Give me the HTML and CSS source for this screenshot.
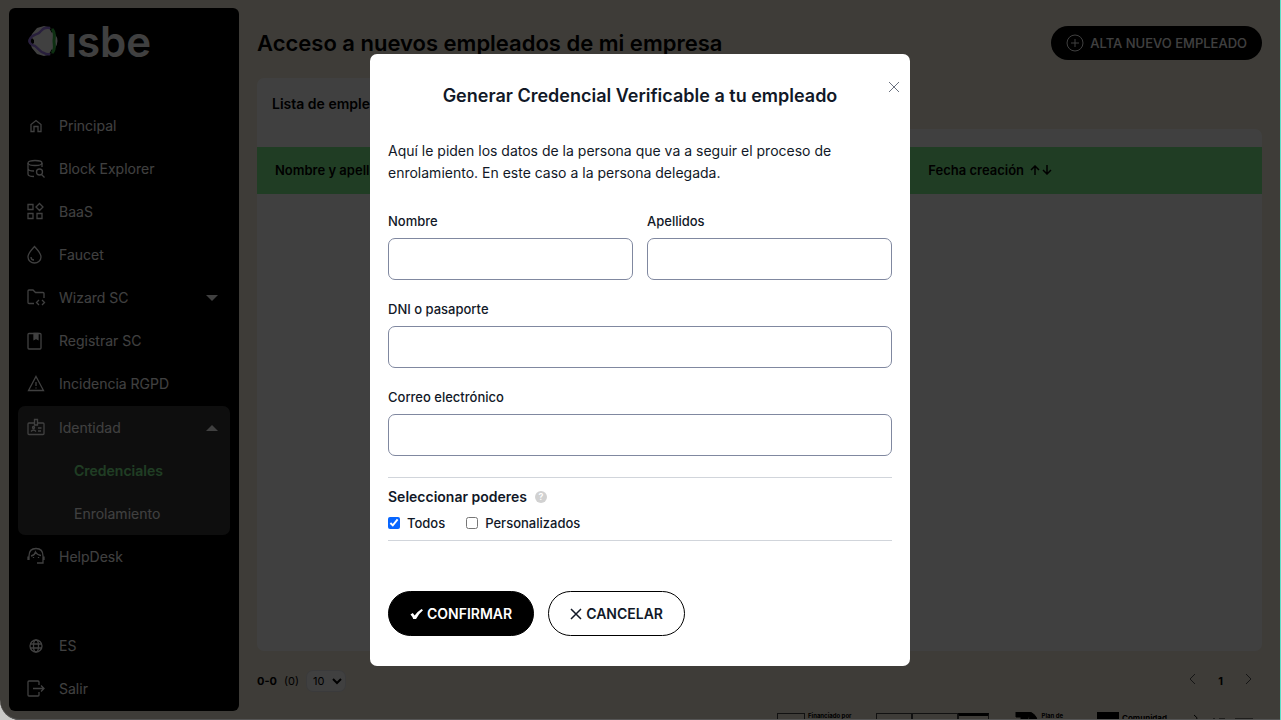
FILE: index.html
```
<!DOCTYPE html>
<html lang="es">
<head>
    <meta charset="UTF-8">
    <meta name="viewport" content="width=device-width, initial-scale=1.0">
    <title>ISBE - Credenciales</title>
    <link rel="stylesheet" href="styles.css">
</head>
<body>

<div class="app">
    <aside class="sidebar">
        <a class="logo" href="#">
            <svg class="logo-mark" width="34" height="32" viewBox="0 0 34 32" fill="none">
                <path d="M17 1L24 3L28 9Q33 16 28 23L24 29L17 31L10 29L5 23Q2 16 5 9L10 3Z" fill="#fff"/>
                <path d="M4 12L7 15V18L4 20ZM22 3L27 4L25 8ZM22 29L27 28L25 24Z" fill="#000"/>
                <path d="M23 3C17 2 16 4 13 7C11 10 5 9 3 14C1 17 4 20 8 21C11 23 13 27 17 28Q20 30 23 29" stroke="#a07cf0" stroke-width="2.500"/>
                <path d="M25 4C29 8 27 12 27 16C27 20 29 24 25 28" stroke="#38c048" stroke-width="3"/>
            </svg>
            <span>ısbe</span>
        </a>

        <nav class="menu">
            <a class="item" href="#">
                <svg class="icon" viewBox="0 0 20 20"><path d="M5 15.500V8.500L10 4.500L15 8.500V15.500H12V10.500H8V15.500Z"/></svg>
                Principal
            </a>
            <a class="item" href="#">
                <svg class="icon" viewBox="0 0 20 20"><ellipse cx="9" cy="4" rx="7" ry="2.500"/><path d="M2 4V15C2 16.500 4 17.500 8 17.500M2 9.500C2 11 4 12 8 12M16 4V8"/><circle cx="13.500" cy="13" r="3"/><path d="M15.500 15.500L18.500 18.500"/></svg>
                Block Explorer
            </a>
            <a class="item" href="#">
                <svg class="icon" viewBox="0 0 20 20"><path d="M2 2.500H7V7.500H2ZM2 11.500H7V16.500H2ZM11 11.500H16V16.500H11ZM13.500 1.500L17 5L13.500 8.500L10 5Z"/></svg>
                BaaS
            </a>
            <a class="item" href="#">
                <svg class="icon" viewBox="0 0 20 20"><path d="M8.500 1.500C6 4.500 2 8 2 12A6.500 6 0 0 0 15 12C15 8 11 4.500 8.500 1.500ZM5 12C5 14 6 15 8 15"/></svg>
                Faucet
            </a>
            <button class="item" type="button">
                <svg class="icon" viewBox="0 0 20 20"><path d="M8 15.500H3Q2 15.500 2 14.500V3Q2 2 3 2H7L9.500 4.500H17Q18 4.500 18 5.500V10M13 12L10.500 14.500L13 17M16 12L18.500 14.500L16 17"/></svg>
                Wizard SC
                <svg class="caret" viewBox="0 0 12 6"><path d="M0 0H12L6 6Z"/></svg>
            </button>
            <a class="item" href="#">
                <svg class="icon" viewBox="0 0 20 20"><rect x="2" y="2.500" width="13" height="15.500" rx="1"/><path class="solid" d="M8 2.500H12V8.500L10 7.500L8 8.500Z"/></svg>
                Registrar SC
            </a>
            <a class="item" href="#">
                <svg class="icon" viewBox="0 0 20 20"><path d="M10 2.500L17.500 16.500H2.500ZM10 8V12M10 13.500V14.500"/></svg>
                Incidencia RGPD
            </a>

            <div class="group">
                <button class="item" type="button">
                    <svg class="icon" viewBox="0 0 20 20"><path d="M8 5H3Q2 5 2 6V15.500Q2 16.500 3 16.500H17Q18 16.500 18 15.500V6Q18 5 17 5H12M8.500 1.500H11.500V7H8.500ZM5 13.500Q7.500 10.500 10 13.500M12 10H15.500M12 13H15"/><circle cx="7.500" cy="9.500" r="1"/></svg>
                    Identidad
                    <svg class="caret" viewBox="0 0 12 6"><path d="M0 6H12L6 0Z"/></svg>
                </button>
                <a class="item sub active" href="#">Credenciales</a>
                <a class="item sub" href="#">Enrolamiento</a>
            </div>

            <a class="item" href="#">
                <svg class="icon" viewBox="0 0 20 20"><path d="M3 13V9C3 4 6 1.500 10 1.500S17 4 17 9V16H11M2 9.500V13M18 9.500V13M5 9C8 8.500 9 7 9.500 5C11 7.500 13 8.500 15 8.500M7.500 10V11M12.500 10V11"/></svg>
                HelpDesk
            </a>
        </nav>

        <div class="menu menu-bottom">
            <button class="item" type="button">
                <svg class="icon" viewBox="0 0 20 20"><circle cx="10" cy="10" r="6"/><ellipse cx="10" cy="10" rx="2.500" ry="6"/><path d="M4.500 8H15.500M4.500 12H15.500"/></svg>
                ES
            </button>
            <a class="item" href="#">
                <svg class="icon" viewBox="0 0 20 20"><path d="M13 6V3Q13 2 12 2H3Q2 2 2 3V16Q2 17 3 17H12Q13 17 13 16V13M7 9.500H18M15 6.500L18 9.500L15 12.500"/></svg>
                Salir
            </a>
        </div>
    </aside>

    <main class="content">
        <header class="page-header">
            <h1>Acceso a nuevos empleados de mi empresa</h1>
            <button class="add-btn" type="button">
                <svg width="18" height="18" viewBox="0 0 18 18"><circle cx="9" cy="9" r="8"/><path d="M9 5V13M5 9H13"/></svg>
                ALTA NUEVO EMPLEADO
            </button>
        </header>

        <h2 class="tab">Lista de empleados</h2>
        <section class="panel">
            <table>
                <thead>
                    <tr>
                        <th class="col-name">Nombre y apellidos</th>
                        <th>Fecha creación
                            <svg width="22" height="10" viewBox="0 0 22 10"><path d="M5 10V1M1 5L5 1L9 5M17 0V9M13 5L17 9L21 5"/></svg>
                        </th>
                    </tr>
                </thead>
            </table>
        </section>

        <div class="pager">
            <b>0-0</b>
            <span>(0)</span>
            <select aria-label="Filas por página">
                <option>10</option>
                <option>25</option>
            </select>
            <div class="pages">
                <button type="button" aria-label="Anterior"><svg width="8" height="12" viewBox="0 0 8 12"><path d="M7 1L2 6L7 11"/></svg></button>
                <b>1</b>
                <button type="button" aria-label="Siguiente"><svg width="8" height="12" viewBox="0 0 8 12"><path d="M1 1L6 6L1 11"/></svg></button>
            </div>
        </div>

        <footer class="sponsors">
            <div class="sponsor eu"><i></i><b>Financiado por</b></div>
            <div class="sponsor gov"><i></i><i></i><i></i></div>
            <div class="sponsor plan"><svg width="26" height="14" viewBox="0 0 26 14"><path d="M3 0H17Q25 3 25 14H19Q18 7 15 4V14H8V5H3Z"/></svg><b>Plan de</b></div>
            <div class="sponsor madrid"><i></i><b>Comunidad</b></div>
            <svg class="sponsor" width="64" height="14" viewBox="0 0 64 14"><path d="M3 3Q7 5 6 9M22 7H24M28 7H34M44 7H62"/></svg>
        </footer>
    </main>
</div>

<div class="overlay">
    <div class="modal" role="dialog" aria-labelledby="modalTitle">
        <button class="close" type="button" aria-label="Cerrar">
            <svg width="12" height="12" viewBox="0 0 12 12"><path d="M1 1L11 11M11 1L1 11"/></svg>
        </button>
        <h2 id="modalTitle">Generar Credencial Verificable a tu empleado</h2>
        <p class="intro">Aquí le piden los datos de la persona que va a seguir el proceso de enrolamiento. En este caso a la persona delegada.</p>

        <form>
            <div class="row">
                <div class="field">
                    <label for="nombre">Nombre</label>
                    <input type="text" id="nombre">
                </div>
                <div class="field">
                    <label for="apellidos">Apellidos</label>
                    <input type="text" id="apellidos">
                </div>
            </div>
            <div class="field">
                <label for="dni">DNI o pasaporte</label>
                <input type="text" id="dni">
            </div>
            <div class="field">
                <label for="correo">Correo electrónico</label>
                <input type="email" id="correo">
            </div>

            <div class="powers">
                <h3>Seleccionar poderes <span class="help">?</span></h3>
                <div class="checks">
                    <label for="todos"><input type="checkbox" id="todos" checked>Todos</label>
                    <label for="personalizados"><input type="checkbox" id="personalizados">Personalizados</label>
                </div>
            </div>

            <div class="actions">
                <button class="btn confirm" type="button">
                    <svg width="13" height="12" viewBox="0 0 14 12"><path d="M0.500 6.500L3 5L5 7.500Q9 2.500 12.500 0.500L14 2Q9 6 6.500 11.500H3.500Q2.500 8.500 0.500 6.500Z"/></svg>
                    CONFIRMAR
                </button>
                <button class="btn cancel" type="button">
                    <svg width="12" height="12" viewBox="0 0 12 12"><path d="M1 1L11 11M11 1L1 11"/></svg>
                    CANCELAR
                </button>
            </div>
        </form>
    </div>
</div>

</body>
</html>
```
FILE: styles.css
```
* {
    box-sizing: border-box;
}

html {
    background: #c9c9c7;
}

body {
    margin: 0;
    height: 100vh;
    overflow: hidden;
    font-family: Inter, "Liberation Sans", sans-serif;
    font-size: 14px;
    color: #111827;
    border-right: 1px solid #5ce0c8;
}

h1, h2, h3, p {
    margin: 0;
    font-weight: 600;
}

button, input, select {
    font: inherit;
    color: inherit;
}

button {
    cursor: pointer;
}

svg {
    fill: none;
    stroke: currentColor;
    flex-shrink: 0;
}

.app {
    display: flex;
    gap: 18px;
    height: 100vh;
    padding: 8px 18px 0 9px;
    background: #f5eddd;
    border-bottom-left-radius: 20px;
    overflow: hidden;
    color: #000;
}

/* sidebar */
.sidebar {
    display: flex;
    flex-direction: column;
    width: 230px;
    flex-shrink: 0;
    margin-bottom: 9px;
    padding: 7px 9px 1px;
    background: #000;
    border-radius: 6px;
    color: #fff;
}

.logo {
    display: flex;
    align-items: center;
    gap: 5px;
    height: 52px;
    padding-left: 9px;
    color: #fff;
    font-size: 42px;
    font-weight: 600;
    text-decoration: none;
}

.logo-mark {
    stroke: none;
}

.menu {
    margin-top: 37px;
}

.menu-bottom {
    margin-top: auto;
}

.item {
    display: flex;
    align-items: center;
    gap: 13px;
    width: 100%;
    height: 43px;
    padding: 0 12px 0 8px;
    background: none;
    border: 0;
    color: #fff;
    text-decoration: none;
}

.icon {
    width: 20px;
    height: 20px;
    stroke-width: 1.3;
}

.icon .solid {
    fill: currentColor;
}

.caret {
    width: 12px;
    height: 6px;
    margin-left: auto;
    fill: currentColor;
    stroke: none;
}

.group {
    margin-top: 1px;
    background: #383838;
    border-radius: 7px;
}

.sub {
    padding-left: 56px;
}

.active {
    color: #80f490;
    font-weight: 600;
}

/* page */
.content {
    flex: 1;
    display: flex;
    flex-direction: column;
    min-width: 0;
}

.page-header {
    display: flex;
    align-items: center;
    justify-content: space-between;
    height: 70px;
}

h1 {
    font-size: 22px;
}

.add-btn {
    display: flex;
    align-items: center;
    gap: 6px;
    height: 34px;
    padding: 0 15px;
    background: #000;
    border: 0;
    border-radius: 17px;
    color: #fff;
    font-size: 13px;
    font-weight: 500;
}

.tab {
    align-self: flex-start;
    width: 50%;
    height: 51px;
    padding: 0 15px;
    line-height: 51px;
    background: #fff;
    border-radius: 7px 7px 0 0;
    font-size: 14px;
}

.panel {
    flex: 1;
    padding-top: 18px;
    background: #fff;
    border-radius: 0 7px 7px 7px;
}

table {
    width: 100%;
    border-collapse: collapse;
}

th {
    height: 47px;
    padding: 0 18px 2px;
    background: #80f490;
    font-size: 13px;
    font-weight: 600;
    text-align: left;
}

th svg {
    margin-left: 3px;
    stroke-width: 1.5;
}

.col-name {
    width: 65%;
}

.pager {
    display: flex;
    align-items: center;
    height: 59px;
    gap: 7px;
    font-size: 11px;
}

.pager select {
    width: 40px;
    height: 22px;
    padding: 0 0 0 2px;
    background: #fff;
    border: 1px solid #e5e7eb;
    border-radius: 7px;
}

.pages {
    display: flex;
    align-items: center;
    gap: 16px;
    margin-left: auto;
    padding-right: 3px;
}

.pages button {
    width: 20px;
    height: 20px;
    padding: 0;
    background: none;
    border: 0;
    color: #555;
}

/* logo strip, cut by the bottom of the window */
.sponsors {
    display: flex;
    gap: 24px;
    height: 8px;
    margin-top: 2px;
    padding-left: 520px;
    overflow: hidden;
    font-size: 6px;
    line-height: 8px;
}

.sponsor {
    display: flex;
    gap: 3px;
    height: 14px;
    white-space: nowrap;
}

.eu i {
    width: 28px;
    margin-top: 1px;
    border: 1px solid #444;
}

.gov {
    gap: 0;
}

.gov i {
    width: 36px;
    margin-top: 1px;
    border: 1px solid #444;
}

.gov i:nth-child(2) {
    width: 46px;
}

.gov i:last-child {
    width: 31px;
    border-top: 3px solid #000;
}

.plan svg {
    fill: #000;
}

.madrid {
    margin-left: 10px;
}

.madrid i {
    width: 22px;
    background: #000;
}

.madrid b {
    font-size: 8px;
    line-height: 12px;
}

/* modal */
.overlay {
    position: fixed;
    inset: 0 1px 0 0;
    display: flex;
    align-items: center;
    justify-content: center;
    background: rgba(0, 0, 0, .75);
    border-bottom-left-radius: 20px;
    box-shadow: inset 0 -1px #555;
}

.modal {
    position: relative;
    width: 540px;
    max-width: 100%;
    padding: 29px 18px 30px;
    background: #fff;
    border-radius: 7px;
}

.close {
    position: absolute;
    top: 23px;
    right: 6px;
    width: 20px;
    height: 20px;
    padding: 0;
    background: none;
    border: 0;
    color: #6b7280;
    line-height: 0;
}

.modal h2 {
    font-size: 18px;
    line-height: 26px;
    text-align: center;
}

.intro {
    margin: 31px 0 28px;
    font-weight: 400;
    line-height: 22px;
}

.row {
    display: grid;
    grid-template-columns: 1fr 1fr;
    gap: 14px;
}

.field {
    margin-bottom: 20px;
}

.field label {
    display: block;
    margin-bottom: 8px;
    font-size: 13px;
    font-weight: 500;
    line-height: 18px;
}

.field input {
    display: block;
    width: 100%;
    height: 42px;
    padding: 0 12px;
    background: #fff;
    border: 1px solid #8088a0;
    border-radius: 7px;
}

.powers {
    margin-top: 21px;
    padding: 8px 0;
    border-top: 1px solid #d1d5db;
    border-bottom: 1px solid #d1d5db;
}

h3 {
    display: flex;
    align-items: center;
    gap: 8px;
    font-size: 14px;
    line-height: 22px;
}

.help {
    width: 12px;
    height: 12px;
    background: #d1d1d1;
    border-radius: 50%;
    color: #fff;
    font-size: 9px;
    line-height: 12px;
    text-align: center;
}

.checks {
    display: flex;
    gap: 21px;
    margin-top: 6px;
    font-size: 13px;
    font-weight: 500;
    line-height: 18px;
}

.checks label {
    display: flex;
    align-items: center;
    gap: 7px;
}

.checks input {
    width: 12px;
    height: 12px;
    margin: 0;
    accent-color: #0866ff;
}

.actions {
    display: flex;
    gap: 14px;
    margin-top: 50px;
}

.btn {
    display: flex;
    align-items: center;
    gap: 4px;
    height: 45px;
    padding: 0 21px;
    border: 1px solid #000;
    border-radius: 23px;
    font-weight: 600;
}

.confirm {
    background: #000;
    color: #fff;
}

.confirm svg {
    fill: currentColor;
    stroke: none;
}

.cancel {
    background: #fff;
}

.cancel svg {
    stroke-width: 1.5;
}
```
